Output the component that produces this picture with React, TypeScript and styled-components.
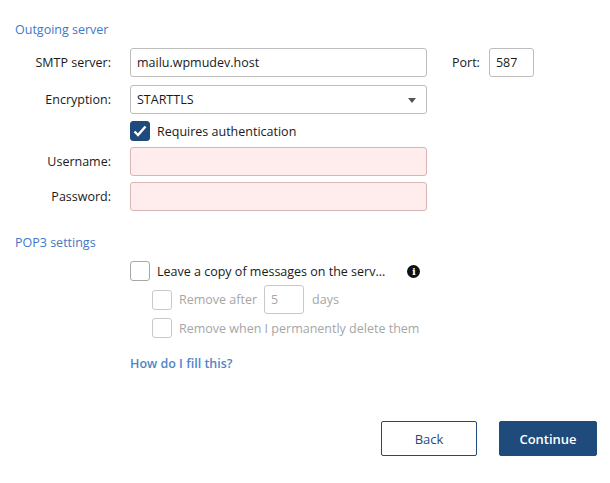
import React from "react";
import styled, { createGlobalStyle } from "styled-components";

const Global = createGlobalStyle`
  body { margin: 0; font-family: "Open Sans", "Noto Sans", sans-serif; font-size: 12.5px; color: #1a1a1a; background: #fff; }
`;

const Page = styled.div`
  width: 610px; height: 483px; box-sizing: border-box; padding: 20px 13px 0 15px;
  display: flex; flex-direction: column;
`;
const Section = styled.div<{ $mt?: number }>`
  color: #3f78c8; font-size: 12.5px; height: 20px; line-height: 20px; margin-top: ${p => p.$mt ?? 0}px;
`;
const Row = styled.div<{ $mt?: number }>`
  display: flex; align-items: center; margin-top: ${p => p.$mt ?? 0}px;
`;
const Label = styled.div`
  width: 96px; text-align: right; margin-right: 19px;
`;
const Input = styled.div<{ $w: number; $pink?: boolean; $dim?: boolean }>`
  width: ${p => p.$w}px; height: 29px; box-sizing: border-box;
  border: 1px solid ${p => (p.$pink ? "#d9b5b5" : p.$dim ? "#c8c8c8" : "#bdbdbd")}; border-radius: 3px;
  background: ${p => (p.$pink ? "#ffecec" : "#fff")};
  color: ${p => (p.$dim ? "#a6a6a6" : "inherit")};
  display: flex; align-items: center; padding: 0 6px; position: relative;
`;
const Caret = styled.div`
  position: absolute; right: 10px; top: 12px; width: 0; height: 0;
  border-left: 4px solid transparent; border-right: 4px solid transparent; border-top: 5px solid #555;
`;
const Box = styled.div<{ $checked?: boolean; $dim?: boolean }>`
  width: 20px; height: 20px; box-sizing: border-box; border-radius: 3px;
  border: 1px solid ${p => (p.$checked ? "#1f4a7c" : p.$dim ? "#c8c8c8" : "#a8a8a8")};
  background: ${p => (p.$checked ? "#1f4a7c" : "#fff")};
  display: flex; align-items: center; justify-content: center; margin-right: 7px;
`;
const Indent = styled.div<{ $w: number }>` width: ${p => p.$w}px; flex-shrink: 0; `;
const Dim = styled.span` color: #a6a6a6; `;
const Link = styled.div` color: #4f86c6; font-weight: 600; margin-left: 115px; margin-top: 17px; `;
const Footer = styled.div` display: flex; justify-content: flex-end; gap: 22px; margin-top: 49px; `;
const Btn = styled.div<{ $primary?: boolean }>`
  width: ${p => (p.$primary ? 98 : 96)}px; height: 35px; box-sizing: border-box; border-radius: 2px;
  display: flex; align-items: center; justify-content: center; font-size: 13px;
  border: 1px solid #1f4a7c; font-weight: ${p => (p.$primary ? 600 : 400)};
  background: ${p => (p.$primary ? "#1f4a7c" : "#fff")}; color: ${p => (p.$primary ? "#fff" : "#1f4a7c")};
`;
const Info = styled.div`
  width: 13px; height: 13px; border-radius: 50%; background: #111; color: #fff;
  font: bold 10px/13px "DejaVu Serif", serif; text-align: center; margin-left: 22px;
`;

export default function App() {
  return (
    <Page>
      <Global />
      <Section>Outgoing server</Section>
      <Row $mt={8}>
        <Label>SMTP server:</Label>
        <Input $w={297}>mailu.wpmudev.host</Input>
        <Indent $w={25} />
        <span>Port:</span>
        <Indent $w={9} />
        <Input $w={45}>587</Input>
      </Row>
      <Row $mt={8}>
        <Label>Encryption:</Label>
        <Input $w={297}>STARTTLS<Caret /></Input>
      </Row>
      <Row $mt={7}>
        <Indent $w={115} />
        <Box $checked>
          <svg width="14" height="12" viewBox="0 0 14 12"><path d="M1.5 6.5 L5 10 L12.5 1.5" stroke="#fff" strokeWidth="2.4" fill="none" /></svg>
        </Box>
        Requires authentication
      </Row>
      <Row $mt={6}>
        <Label>Username:</Label>
        <Input $w={297} $pink />
      </Row>
      <Row $mt={6}>
        <Label>Password:</Label>
        <Input $w={297} $pink />
      </Row>
      <Section $mt={22}>POP3 settings</Section>
      <Row $mt={8}>
        <Indent $w={115} />
        <Box />
        Leave a copy of messages on the serv...
        <Info>i</Info>
      </Row>
      <Row $mt={4}>
        <Indent $w={137} />
        <Box $dim />
        <Dim>Remove after</Dim>
        <Indent $w={7} />
        <Input $w={40} $dim>5</Input>
        <Indent $w={8} />
        <Dim>days</Dim>
      </Row>
      <Row $mt={4}>
        <Indent $w={137} />
        <Box $dim />
        <Dim>Remove when I permanently delete them</Dim>
      </Row>
      <Link>How do I fill this?</Link>
      <Footer>
        <Btn>Back</Btn>
        <Btn $primary>Continue</Btn>
      </Footer>
    </Page>
  );
}
